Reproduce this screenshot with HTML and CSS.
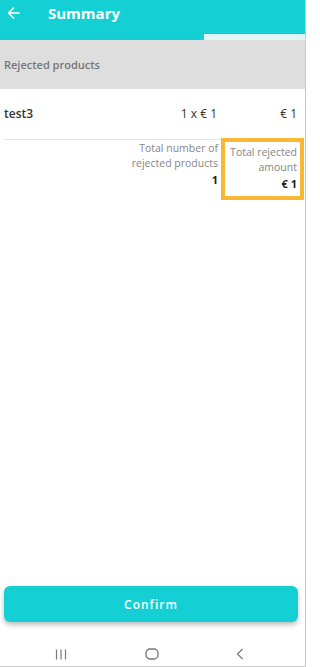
FILE: index.html
```html
<!DOCTYPE html>
<html>
<head>
<meta charset="utf-8">
<link rel="stylesheet" href="styles.css">
</head>
<body>
<div class="app">
  <header class="topbar">
    <svg class="back" width="13" height="12" viewBox="0 0 13 12"><path d="M12 6H1.5M6.5 1L1.5 6l5 5" fill="none" stroke="#fff" stroke-width="1.6" stroke-linecap="round" stroke-linejoin="round"/></svg>
    <span class="title">Summary</span>
  </header>
  <div class="progress"><div class="progress-fill"></div></div>
  <div class="section-head">Rejected products</div>
  <div class="row">
    <span class="name">test3</span>
    <span class="qty">1 x € 1</span>
    <span class="amount">€ 1</span>
  </div>
  <div class="divider"></div>
  <div class="totals">
    <div class="total-col">
      <div class="label">Total number of rejected products</div>
      <div class="value">1</div>
    </div>
    <div class="total-col highlight">
      <div class="label">Total rejected amount</div>
      <div class="value">€ 1</div>
    </div>
  </div>
  <div class="spacer"></div>
  <div class="actions">
    <button class="confirm">Confirm</button>
  </div>
  <nav class="sysnav">
    <svg width="12" height="11" viewBox="0 0 12 11"><path d="M1.5 0.5v10M6 0.5v10M10.5 0.5v10" stroke="#777" stroke-width="1.2"/></svg>
    <svg width="14" height="12" viewBox="0 0 14 12"><rect x="1" y="1" width="12" height="10" rx="4" fill="none" stroke="#777" stroke-width="1.3"/></svg>
    <svg width="8" height="12" viewBox="0 0 8 12"><path d="M6.5 1L1.5 6l5 5" fill="none" stroke="#777" stroke-width="1.2"/></svg>
  </nav>
</div>
</body>
</html>
```
FILE: styles.css
```css
* { box-sizing: border-box; }
html, body { margin: 0; padding: 0; background: #fff; }
body { font-family: "Open Sans", "Noto Sans", sans-serif; }
.app {
  width: 306px;
  height: 667px;
  display: flex;
  flex-direction: column;
  border-right: 1px solid #c9c9c9;
  border-bottom: 1px solid #c9c9c9;
}
.topbar {
  height: 33px;
  background: #14cfd4;
  display: flex;
  align-items: center;
  padding-left: 7px;
  padding-bottom: 8px;
}
.back { display: block; }
.title {
  margin-left: 28px;
  color: #fff;
  font-weight: 700;
  font-size: 15px;
}
.progress {
  height: 7px;
  background: #dff6f6;
  border-top: 1px solid #1bc6cb;
}
.progress-fill {
  width: 204px;
  height: 100%;
  background: #14cfd4;
}
.section-head {
  height: 49px;
  background: #dedede;
  display: flex;
  align-items: center;
  padding-left: 4px;
  padding-bottom: 1px;
  font-size: 11px;
  font-weight: 600;
  color: #767676;
}
.row {
  height: 50px;
  display: flex;
  align-items: center;
  padding: 0 8px 2px 4px;
  font-size: 12px;
  color: #333;
}
.name { flex: 1; font-weight: 600; }
.qty { width: 120px; text-align: right; }
.amount { width: 80px; text-align: right; }
.divider {
  margin-left: 4px;
  border-top: 1px solid #e6e6e6;
}
.totals {
  display: flex;
  justify-content: flex-end;
  padding-right: 1px;
  margin-top: -2px;
}
.total-col {
  text-align: right;
  font-size: 10.5px;
  line-height: 15px;
  color: #858585;
  padding: 3px 3px 2px 3px;
}
.total-col:first-child { width: 96px; }
.highlight {
  width: 83px;
  border: 4px solid #fbb733;
  padding: 3px 3px 4px 3px;
}
.value {
  color: #222;
  font-weight: 700;
  font-size: 11px;
  line-height: 17px;
}
.spacer { flex: 1; }
.actions { padding: 0 7px 0 4px; }
.confirm {
  width: 100%;
  height: 36px;
  border: none;
  border-radius: 6px;
  background: #14cfd4;
  color: #fff;
  font-family: "Open Sans", "Noto Sans", sans-serif;
  font-size: 12px;
  font-weight: 600;
  letter-spacing: 1px;
  box-shadow: 0 3px 5px rgba(0,0,0,0.25);
}
.sysnav {
  height: 44px;
  display: flex;
  align-items: center;
  justify-content: space-between;
  padding: 20px 61px 0 55px;
}
.sysnav svg { display: block; }
```
